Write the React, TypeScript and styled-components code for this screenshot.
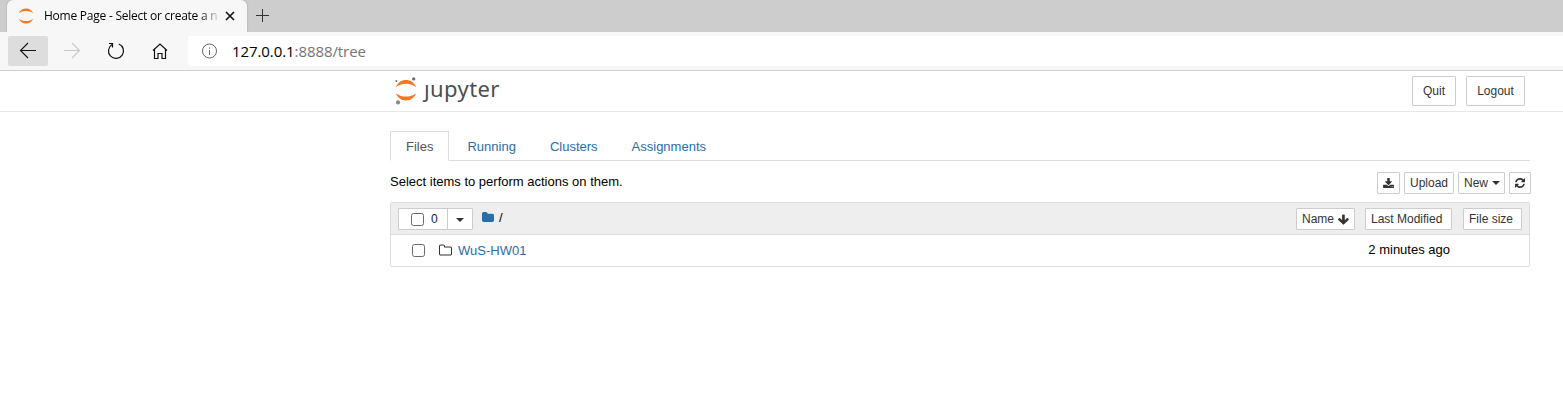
import React from "react";
import styled, { createGlobalStyle } from "styled-components";

const Global = createGlobalStyle`
  * { box-sizing: border-box; }
  body { margin: 0; background: #fff; font-family: "Liberation Sans", Arial, sans-serif; font-size: 13px; color: #000; overflow: hidden; }
  button { font-family: inherit; margin: 0; }
`;

const TabStrip = styled.div`
  height: 32px;
  background: #cdcdcd;
  display: flex;
  padding-left: 7px;
`;
const BrowserTab = styled.div`
  width: 240px;
  height: 32px;
  background: #f7f7f7;
  border-radius: 6px 6px 0 0;
  display: flex;
  align-items: center;
  padding-left: 11px;
  box-shadow: 0 0 2px rgba(0, 0, 0, 0.25);
`;
const TabTitle = styled.div`
  width: 174px;
  margin-left: 10px;
  white-space: nowrap;
  font: 12px/18px "Open Sans", "Noto Sans", sans-serif;
  letter-spacing: -0.24px;
  -webkit-mask-image: linear-gradient(to right, #000 156px, rgba(0, 0, 0, 0.15) 174px);
  mask-image: linear-gradient(to right, #000 156px, rgba(0, 0, 0, 0.15) 174px);
`;
const CloseIcon = styled.svg`
  margin-left: 7px;
`;
const PlusIcon = styled.svg`
  margin: 9px 0 0 9px;
`;
const Toolbar = styled.div`
  height: 39px;
  background: #f7f7f7;
  border-bottom: 1px solid #cfcfcf;
  display: flex;
  padding: 4px 0 0 8px;
  position: relative;
`;
const NavButton = styled.div<{ $active?: boolean }>`
  width: 40px;
  height: 30px;
  margin-right: 4px;
  border-radius: 2px;
  background: ${(p) => (p.$active ? "#dddddd" : "transparent")};
  display: flex;
  align-items: center;
  justify-content: center;
`;
const AddressBar = styled.div`
  flex: 1;
  height: 30px;
  margin-left: 4px;
  padding-left: 13px;
  background: #fff;
  border-radius: 3px 0 0 3px;
  display: flex;
  align-items: center;
`;
const Url = styled.div`
  margin-left: 14px;
  font: 15px/28px "Open Sans", "Noto Sans", sans-serif;
  letter-spacing: -0.08px;
  color: #757575;
`;
const Host = styled.span`
  color: #000;
`;

const Header = styled.header`
  height: 41px;
  border-bottom: 1px solid #e7e7e7;
  display: flex;
  align-items: flex-start;
  padding: 5px 38px 0 394px;
`;
const Brand = styled.div`
  display: flex;
  flex: 1;
`;
const Wordmark = styled.div`
  margin-left: 7px;
  font: 22px/28px "Noto Sans", "Open Sans", sans-serif;
  letter-spacing: 0.4px;
  margin-top: -2px;
  color: #4e4e4e;
`;
const HeaderButton = styled.button<{ $w: number }>`
  width: ${(p) => p.$w}px;
  height: 30px;
  margin-left: 10px;
  padding: 0;
  border: 1px solid #ccc;
  border-radius: 1px;
  background: #fff;
  font-size: 12px;
  color: #333;
`;

const Main = styled.main`
  width: 1140px;
  margin: 19px 0 0 390px;
`;
const Tabs = styled.nav`
  height: 30px;
  display: flex;
  border-bottom: 1px solid #ddd;
`;
const Tab = styled.a<{ $active?: boolean }>`
  height: 30px;
  margin-right: 2px;
  padding: 0 15px;
  border: 1px solid ${(p) => (p.$active ? "#ddd" : "transparent")};
  border-bottom-color: ${(p) => (p.$active ? "#fff" : "transparent")};
  border-radius: 1px 1px 0 0;
  line-height: 29px;
  color: ${(p) => (p.$active ? "#555" : "#296eaa")};
`;
const Actions = styled.div`
  height: 41px;
  display: flex;
  align-items: flex-start;
  padding-top: 11px;
  margin-right: -1px;
`;
const Hint = styled.div`
  flex: 1;
  line-height: 20px;
`;
const SmallButton = styled.button<{ $w: number; $gap?: number }>`
  width: ${(p) => p.$w}px;
  height: 22px;
  margin-left: ${(p) => p.$gap ?? 4}px;
  padding: 0 5px;
  border: 1px solid #ccc;
  border-radius: 1px;
  background: #fff;
  font-size: 12px;
  color: #333;
  white-space: nowrap;
  display: flex;
  align-items: center;
  gap: 4px;
`;
const Listing = styled.section`
  height: 65px;
  border: 1px solid #ddd;
  border-radius: 2px;
`;
const ListHeader = styled.div`
  height: 32px;
  background: #eee;
  border-bottom: 1px solid #ddd;
  display: flex;
  padding: 5px 7px 0 7px;
`;
const Selector = styled.div`
  width: 75px;
  height: 22px;
  background: #fff;
  border: 1px solid #ccc;
  border-radius: 1px;
  display: flex;
  align-items: center;
  font-size: 12px;
`;
const Check = styled.span`
  width: 13px;
  height: 13px;
  border: 1px solid #6b6b6b;
  border-radius: 2.5px;
  background: #fff;
`;
const SelectAll = styled.div`
  width: 49px;
  height: 20px;
  padding-left: 12px;
  border-right: 1px solid #ccc;
  display: flex;
  align-items: center;
  gap: 7px;
  color: #123;
`;
const Caret = styled.span`
  border: 4px solid transparent;
  border-top-color: #333;
  border-bottom: 0;
`;
const SelectorMenu = styled.div`
  flex: 1;
  display: flex;
  justify-content: center;
  padding-top: 2px;
`;
const Crumbs = styled.div`
  flex: 1;
  display: flex;
  align-items: flex-start;
  gap: 5px;
  padding: 2px 0 0 9px;
  line-height: 16px;
`;
const Row = styled.div`
  height: 31px;
  display: flex;
  align-items: center;
  padding: 0 79px 0 21px;
`;
const FileName = styled.a`
  flex: 1;
  margin-left: 6px;
  color: #296eaa;
`;
const Modified = styled.span`
  padding-bottom: 2px;
`;
const FolderSlot = styled.span`
  display: flex;
  margin-left: 14px;
  padding-bottom: 1px;
`;

const paths = {
  download: "M1280 1344q0-26-19-45t-45-19-45 19-19 45 19 45 45 19 45-19 19-45zm256 0q0-26-19-45t-45-19-45 19-19 45 19 45 45 19 45-19 19-45zm128-224v320q0 40-28 68t-68 28h-1472q-40 0-68-28t-28-68v-320q0-40 28-68t68-28h465l135 136q58 56 136 56t136-56l136-136h464q40 0 68 28t28 68zm-325-569q17 41-14 70l-448 448q-18 19-45 19t-45-19l-448-448q-31-29-14-70 17-39 59-39h256v-448q0-26 19-45t45-19h256q26 0 45 19t19 45v448h256q42 0 59 39z",
  refresh: "M1511 928q0 5-1 7-64 268-268 434.5t-478 166.5q-146 0-282.5-55t-243.5-157l-129 129q-19 19-45 19t-45-19-19-45v-448q0-26 19-45t45-19h448q26 0 45 19t19 45-19 45l-137 137q71 66 161 102t187 36q134 0 250-65t186-179q11-17 53-117 8-23 30-23h192q13 0 22.5 9.5t9.5 22.5zm25-800v448q0 26-19 45t-45 19h-448q-26 0-45-19t-19-45 19-45l138-138q-148-137-349-137-134 0-250 65t-186 179q-11 17-53 117-8 23-30 23h-199q-13 0-22.5-9.5t-9.5-22.5v-7q65-268 270-434.5t480-166.5q146 0 284 55.5t245 156.5l130-129q19-19 45-19t45 19 19 45z",
  arrowDown: "M1611 832q0 53-37 90l-651 652q-39 37-91 37-53 0-90-37l-651-652q-38-36-38-90 0-53 38-91l74-75q39-37 91-37 53 0 90 37l294 294v-704q0-52 38-90t90-38h128q52 0 90 38t38 90v704l294-294q37-37 90-37 52 0 91 37l75 75q37 39 37 91z",
  folder: "M1664 608v704q0 92-66 158t-158 66h-1216q-92 0-158-66t-66-158v-960q0-92 66-158t158-66h320q92 0 158 66t66 158v32h672q92 0 158 66t66 158z",
  folderOpen: "M1536 1312v-704q0-40-28-68t-68-28h-704q-40 0-68-28t-28-68v-64q0-40-28-68t-68-28h-320q-40 0-68 28t-28 68v960q0 40 28 68t68 28h1216q40 0 68-28t28-68zm128-704v704q0 92-66 158t-158 66h-1216q-92 0-158-66t-66-158v-960q0-92 66-158t158-66h320q92 0 158 66t66 158v32h672q92 0 158 66t66 158z",
};

function Glyph({ name, w, h, box, color = "#333" }: { name: keyof typeof paths; w: number; h: number; box: string; color?: string }) {
  return (
    <svg width={w} height={h} viewBox={box} fill={color}>
      <path d={paths[name]} />
    </svg>
  );
}

const Favicon = () => (
  <svg width="16" height="16" viewBox="0 0 16 16" fill="#f37726">
    <path d="M.8 5.300C2 2.300 4.700.5 8 .5s6 1.800 7.200 4.800C13.300 3.700 10.800 2.900 8 2.900S2.700 3.700.8 5.300z" />
    <path d="M.8 10.700C2 13.700 4.700 15.500 8 15.500s6-1.800 7.200-4.800c-1.900 1.600-4.400 2.400-7.200 2.400s-5.300-.8-7.200-2.400z" />
  </svg>
);

const JupyterMark = () => (
  <svg width="23" height="30" viewBox="0 0 23 30">
    <g fill="#f37726">
      <path d="M2 11.200C3.600 6.600 7.400 4 12 4s8.400 2.600 10 7.200C19.400 9 16 7.800 12 7.800s-7.400 1.200-10 3.400z" />
      <path d="M2 17.200C3.600 21.800 7.400 24.400 12 24.400s8.400-2.600 10-7.200c-2.600 2.200-6 3.400-10 3.400s-7.400-1.200-10-3.400z" />
    </g>
    <circle cx="19.700" cy="2.900" r="1.700" fill="#6e6e6e" />
    <circle cx="2.400" cy="5" r="1" fill="#6e6e6e" />
    <circle cx="4" cy="26.400" r="2.100" fill="#8a8a8a" />
  </svg>
);

const Line = ({ d, color = "#111", w = 20, h = 20, sw = 1.1 }: { d: string; color?: string; w?: number; h?: number; sw?: number }) => (
  <svg width={w} height={h} viewBox={`0 0 ${w} ${h}`} fill="none" stroke={color} strokeWidth={sw}>
    <path d={d} />
  </svg>
);

export default function App() {
  return (
    <>
      <Global />
      <TabStrip>
        <BrowserTab>
          <Favicon />
          <TabTitle>Home Page - Select or create a n</TabTitle>
          <CloseIcon width="10" height="10" viewBox="0 0 10 10" stroke="#111" strokeWidth="1.6">
            <path d="M1 1l8 8M9 1l-8 8" />
          </CloseIcon>
        </BrowserTab>
        <PlusIcon width="13" height="13" viewBox="0 0 13 13" stroke="#333" strokeWidth="1">
          <path d="M6.500 0v13M0 6.500h13" />
        </PlusIcon>
      </TabStrip>
      <Toolbar>
        <NavButton $active><Line d="M18 9.500H2.500M10 2L2.500 9.500L10 17" /></NavButton>
        <NavButton><Line color="#c8c8c8" d="M2 9.500H17.500M10 2L17.500 9.500L10 17" /></NavButton>
        <NavButton><Line d="M12.800 3A7.500 7.500 0 1 1 6 3.600M3 2.500H6.500V6.500" sw={1.2} /></NavButton>
        <NavButton><Line d="M3 9.500L10 3L17 9.500M4.500 8.500V17.500H8V12.500H12V17.500H15.500V8.500" sw={1.2} /></NavButton>
        <AddressBar>
          <svg width="17" height="17" viewBox="0 0 17 17" fill="none" stroke="#666">
            <circle cx="8.500" cy="8" r="7" />
            <path d="M8.500 7V12M8.500 4.500V5.700" />
          </svg>
          <Url><Host>127.0.0.1</Host>:8888/tree</Url>
        </AddressBar>
      </Toolbar>
      <Header>
        <Brand>
          <JupyterMark />
          <Wordmark>ȷupyter</Wordmark>
        </Brand>
        <HeaderButton $w={44}>Quit</HeaderButton>
        <HeaderButton $w={59}>Logout</HeaderButton>
      </Header>
      <Main>
        <Tabs>
          <Tab $active>Files</Tab>
          <Tab>Running</Tab>
          <Tab>Clusters</Tab>
          <Tab>Assignments</Tab>
        </Tabs>
        <Actions>
          <Hint>Select items to perform actions on them.</Hint>
          <SmallButton $w={23}><Glyph name="download" w={11} h={10} box="0 0 1664 1536" /></SmallButton>
          <SmallButton $w={50}>Upload</SmallButton>
          <SmallButton $w={47}>New<Caret /></SmallButton>
          <SmallButton $w={22}><Glyph name="refresh" w={10} h={10} box="0 0 1536 1536" /></SmallButton>
        </Actions>
        <Listing>
          <ListHeader>
            <Selector>
              <SelectAll><Check />0</SelectAll>
              <SelectorMenu><Caret /></SelectorMenu>
            </Selector>
            <Crumbs>
              <Glyph name="folder" w={12} h={14} box="0 -64 1664 1792" color="#296eaa" />
              <span>/</span>
            </Crumbs>
            <SmallButton $w={59}>Name<Glyph name="arrowDown" w={11} h={11} box="40 64 1600 1600" /></SmallButton>
            <SmallButton $w={87} $gap={10}>Last Modified</SmallButton>
            <SmallButton $w={59} $gap={11}>File size</SmallButton>
          </ListHeader>
          <Row>
            <Check />
            <FolderSlot><Glyph name="folderOpen" w={13} h={14} box="0 -64 1664 1792" /></FolderSlot>
            <FileName>WuS-HW01</FileName>
            <Modified>2 minutes ago</Modified>
          </Row>
        </Listing>
      </Main>
    </>
  );
}
